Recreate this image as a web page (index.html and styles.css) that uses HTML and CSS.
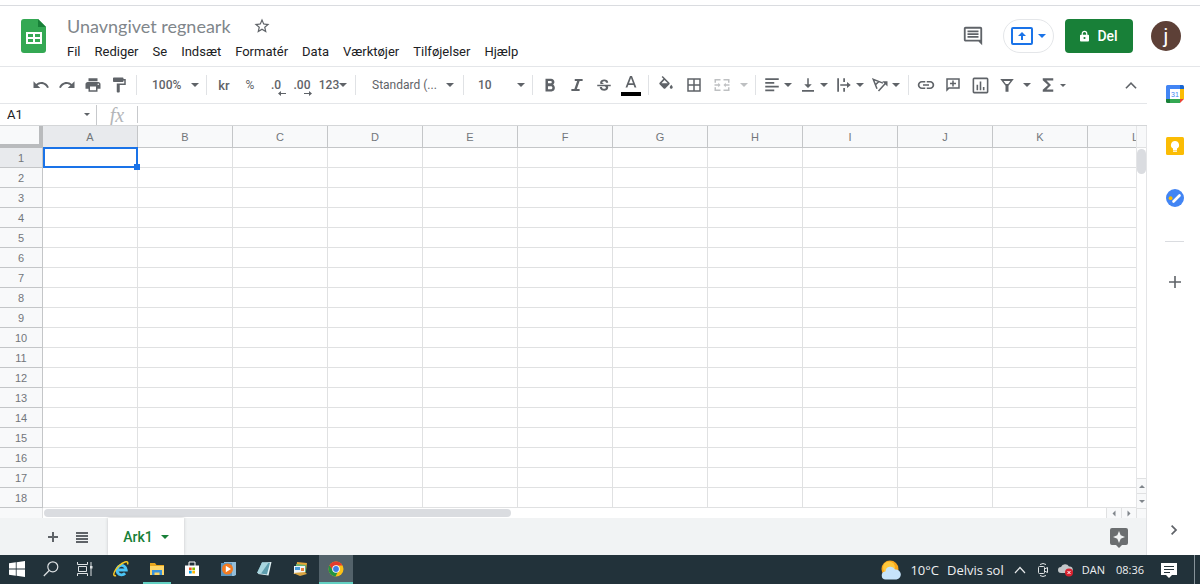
FILE: index.html
```html
<!DOCTYPE html>
<html lang="da">
<head>
<meta charset="utf-8">
<title>Unavngivet regneark</title>
<link rel="stylesheet" href="styles.css">
</head>
<body>
<header class="header">
  <svg class="logo" viewBox="0 0 26 36"><path fill="#34a853" d="M3 1h14l8 8v23a3 3 0 0 1-3 3H3a3 3 0 0 1-3-3V4a3 3 0 0 1 3-3z"/><path fill="#188038" d="M17 1l8 8h-8z"/><path fill="#fff" fill-rule="evenodd" d="M5 14h16v12H5zM7 16v3h5v-3zm7 0v3h5v-3zM7 21v3h5v-3zm7 0v3h5v-3z"/></svg>
  <div class="heading">
    <div class="title-row">
      <h1 class="title">Unavngivet regneark</h1>
      <button class="plain star" aria-label="Stjernemarkér"><svg class="icon" viewBox="0 0 24 24"><path d="M22 9.24l-7.19-.62L12 2 9.19 8.63 2 9.24l5.46 4.73L5.82 21 12 17.27 18.18 21l-1.63-7.03L22 9.24zM12 15.4l-3.76 2.27 1-4.28-3.32-2.88 4.38-.38L12 6.1l1.71 4.04 4.38.38-3.32 2.88 1 4.28L12 15.4z"/></svg></button>
    </div>
    <nav class="menu">
      <button class="plain">Fil</button><button class="plain">Rediger</button><button class="plain">Se</button><button class="plain">Indsæt</button><button class="plain">Formatér</button><button class="plain">Data</button><button class="plain">Værktøjer</button><button class="plain">Tilføjelser</button><button class="plain">Hjælp</button>
    </nav>
  </div>
  <div class="actions">
    <button class="plain comments" aria-label="Kommentarer"><svg class="icon large" viewBox="0 0 24 24"><path d="M22 4c0-1.100-.9-2-2-2H4c-1.100 0-2 .9-2 2v12c0 1.100.9 2 2 2h14l4 4V4zM4 16V4h16v12z"/><path d="M6 12h12v2H6zM6 9h12v2H6zM6 6h12v2H6z"/></svg></button>
    <button class="plain present" aria-label="Præsentér"><svg class="present-icon" viewBox="0 0 22 18"><rect x="1" y="1" width="20" height="16" rx="1" fill="none" stroke="#1a73e8" stroke-width="2"/><path fill="#1a73e8" d="M10 13V9H7l4-4 4 4h-3v4z"/></svg><span class="caret"></span></button>
    <button class="plain share"><svg class="lock" viewBox="0 0 10 12"><path fill="none" stroke="#fff" stroke-width="1.300" d="M2.500 5V3.300a2.500 2.500 0 0 1 5 0V5"/><path fill="#fff" fill-rule="evenodd" d="M1 4.500h8a1 1 0 0 1 1 1V11a1 1 0 0 1-1 1H1a1 1 0 0 1-1-1V5.500a1 1 0 0 1 1-1zM5 7a1.200 1.200 0 1 0 0 2.400A1.200 1.200 0 0 0 5 7z"/></svg>Del</button>
    <button class="plain avatar" aria-label="Konto">j</button>
  </div>
</header>
<div class="workspace">
  <main class="editor">
    <div class="toolbar">
      <div class="group">
        <button class="plain tool" aria-label="Fortryd"><svg class="icon" viewBox="0 0 24 24"><path d="M12.500 8c-2.650 0-5.050.99-6.900 2.600L2 7v9h9l-3.620-3.620c1.390-1.160 3.160-1.880 5.120-1.880 3.540 0 6.550 2.310 7.600 5.500l2.370-.78C21.080 11.030 17.150 8 12.500 8z"/></svg></button>
        <button class="plain tool" aria-label="Annuller fortryd"><svg class="icon" viewBox="0 0 24 24"><path d="M18.400 10.600C16.550 8.990 14.150 8 11.500 8c-4.650 0-8.580 3.030-9.960 7.220L3.900 16c1.050-3.190 4.050-5.500 7.600-5.500 1.950 0 3.730.72 5.120 1.880L13 16h9V7l-3.600 3.600z"/></svg></button>
        <button class="plain tool" aria-label="Udskriv"><svg class="icon" viewBox="0 0 24 24"><path d="M19 8H5c-1.660 0-3 1.340-3 3v6h4v4h12v-4h4v-6c0-1.660-1.340-3-3-3zm-3 11H8v-5h8v5zm3-7c-.55 0-1-.45-1-1s.45-1 1-1 1 .45 1 1-.45 1-1 1zm-1-9H6v4h12V3z"/></svg></button>
        <button class="plain tool" aria-label="Formatpensel"><svg class="icon" viewBox="0 0 24 24"><path d="M18 4V3c0-.55-.45-1-1-1H5c-.55 0-1 .45-1 1v4c0 .55.45 1 1 1h12c.55 0 1-.45 1-1V6h1v4H9v11c0 .55.45 1 1 1h2c.55 0 1-.45 1-1v-9h8V4h-3z"/></svg></button>
      </div>
      <span class="sep"></span>
      <label class="pick pick-zoom"><select aria-label="Zoom"><option>100%</option></select><span class="caret"></span></label>
      <span class="sep"></span>
      <div class="group">
        <button class="plain tool strong">kr</button>
        <button class="plain tool">%</button>
        <button class="plain tool decimal">.0<svg class="shift" viewBox="0 0 8 5"><path d="M3 0v2h5v1H3v2L0 2.500z"/></svg></button>
        <button class="plain tool decimal">.00<svg class="shift" viewBox="0 0 8 5"><path d="M5 0v2H0v1h5v2l3-2.500z"/></svg></button>
        <button class="plain number">123<span class="caret"></span></button>
      </div>
      <span class="sep"></span>
      <label class="pick pick-font"><select aria-label="Skrifttype"><option>Standard (...</option></select><span class="caret"></span></label>
      <span class="sep"></span>
      <label class="pick pick-size"><select aria-label="Skriftstørrelse"><option>10</option></select><span class="caret"></span></label>
      <span class="sep"></span>
      <div class="group tight">
        <button class="plain tool" aria-label="Fed"><svg class="icon" viewBox="0 0 24 24"><path d="M16.200 11.200c1-.7 1.700-1.900 1.700-3.200 0-2.500-1.900-4.500-4.400-4.500H6v17h8.200c2.400 0 4.300-2 4.300-4.500 0-2-.9-3.900-2.300-4.800zM9.300 6.500h3.400c1 0 1.700.7 1.700 1.600s-.7 1.700-1.700 1.700H9.300zm4 11h-4v-4h4c1.100 0 1.900.8 1.900 2s-.8 2-1.900 2z"/></svg></button>
        <button class="plain tool" aria-label="Kursiv"><svg class="icon" viewBox="0 0 24 24"><path d="M9 4v2.800h3.200L8.500 17.200H4.500V20h11v-2.800h-3.700l3.700-10.400h4V4z"/></svg></button>
        <button class="plain tool" aria-label="Gennemstreget"><svg class="icon" viewBox="0 0 24 24"><path transform="translate(0 1.500)" d="M6.850 7.080C6.850 4.370 9.450 3 12.240 3c1.640 0 3 .49 3.900 1.280.77.65 1.460 1.730 1.460 3.240h-3.010c0-.31-.05-.59-.15-.85-.29-.86-1.200-1.280-2.250-1.280-1.860 0-2.340 1.020-2.340 1.700 0 .48.25.88.74 1.210.38.25.77.48 1.410.7H7.390c-.21-.34-.54-.89-.54-1.920zM21 12v-2H3v2h9.620c1.150.45 1.960.75 1.960 1.970 0 1-.81 1.670-2.280 1.670-1.540 0-2.930-.54-2.930-2.510H6.400c0 .55.08 1.130.24 1.580.81 2.290 3.290 3.300 5.670 3.300 2.270 0 5.300-.89 5.300-4.050 0-.3-.01-1.160-.48-1.940H21V12z"/></svg></button>
        <button class="plain tool" aria-label="Tekstfarve"><svg class="text-color" viewBox="0 0 20 22"><path d="M9 2L4.500 13.500h1.900l.9-2.500h5.300l.9 2.500h1.900L11 2zM8 9.300L10 4l2 5.300z"/><path fill="#000" d="M0 18h20v4H0z"/></svg></button>
      </div>
      <span class="sep"></span>
      <div class="group loose">
        <button class="plain tool" aria-label="Udfyldningsfarve"><svg class="icon" viewBox="0 0 24 24"><path d="M16.560 8.940L7.620 0 6.210 1.410l2.380 2.380-5.150 5.150c-.59.59-.59 1.540 0 2.120l5.500 5.500c.6.590 1.530.590 2.120 0l5.500-5.500c.59-.58.59-1.530 0-2.120zM6 9.500L10 5.210 14.300 9.500z"/><path d="M19 11.500s-2 2.170-2 3.500c0 1.100.9 2 2 2s2-.9 2-2c0-1.330-2-3.500-2-3.500z"/></svg></button>
        <button class="plain tool" aria-label="Kanter"><svg class="icon" viewBox="0 0 24 24"><path d="M3 3v18h18V3H3zm8 16H5v-6h6v6zm0-8H5V5h6v6zm8 8h-6v-6h6v6zm0-8h-6V5h6v6z"/></svg></button>
        <button class="plain merge" aria-label="Flet celler" disabled><svg class="icon" viewBox="0 0 24 24"><path d="M2 4h8v2H4v3H2zm12 0h8v5h-2V6h-6zM2 15h2v3h6v2H2zm18 0h2v5h-8v-2h6zM2 11h5V9l3 3-3 3v-2H2zm20 0h-5V9l-3 3 3 3v-2h5z"/></svg><span class="caret"></span></button>
      </div>
      <span class="sep"></span>
      <div class="group">
        <button class="plain drop" aria-label="Juster vandret"><svg class="icon" viewBox="0 0 24 24"><path d="M3 3h18v2.400H3zM3 8h12v2.400H3zM3 13h18v2.400H3zM3 18h12v2.400H3z"/></svg><span class="caret"></span></button>
        <button class="plain drop" aria-label="Juster lodret"><svg class="icon" viewBox="0 0 24 24"><path d="M17 11h-4V3h-2v8H7l5 5zM4 18.500V21h16v-2.500z"/></svg><span class="caret"></span></button>
        <button class="plain drop" aria-label="Tekstombrydning"><svg class="icon" viewBox="0 0 24 24"><path d="M3 3h2.300v18H3zM11 3h2.300v5H11zM11 16h2.300v5H11zM7 11h9V8l5 4-5 4v-3H7z"/></svg><span class="caret"></span></button>
        <button class="plain drop" aria-label="Tekstrotation"><svg class="icon" viewBox="0 0 24 24"><path fill="none" stroke="#5f6368" stroke-width="2" d="M8 17L3 4.500 16 9.500M6 11.500l5-4.500M10 20L20 9"/><path d="M15 7h7v7z"/></svg><span class="caret"></span></button>
      </div>
      <span class="sep"></span>
      <div class="group tight">
        <button class="plain tool" aria-label="Indsæt link"><svg class="icon" viewBox="0 0 24 24"><path d="M3.300 12c0-1.900 1.400-3.300 3.200-3.300H11V6.600H6.500C3.500 6.600 1 9 1 12s2.500 5.400 5.500 5.400H11v-2.100H6.500c-1.800 0-3.200-1.400-3.200-3.300zM8 13.100h8v-2.200H8zm9.500-6.500H13v2.100h4.500c1.800 0 3.200 1.400 3.200 3.300s-1.400 3.300-3.200 3.300H13v2.100h4.500c3 0 5.500-2.400 5.500-5.400s-2.500-5.400-5.500-5.400z"/></svg></button>
        <button class="plain tool" aria-label="Indsæt kommentar"><svg class="icon" viewBox="0 0 24 24"><path fill-rule="evenodd" d="M3 3h18v14H7l-4 4zm2 2v11l1-1h13V5zM11 6h2v3h3v2h-3v3h-2v-3H8V9h3z"/></svg></button>
        <button class="plain tool" aria-label="Indsæt diagram"><svg class="icon chart" viewBox="0 0 24 24"><path fill-rule="evenodd" d="M4 2h16a2 2 0 0 1 2 2v16a2 2 0 0 1-2 2H4a2 2 0 0 1-2-2V4a2 2 0 0 1 2-2zm0 2v16h16V4zM7 11h2v7H7zM11 7h2v11h-2zM15 14h2v4h-2z"/></svg></button>
        <button class="plain filter" aria-label="Opret filter"><svg class="icon" viewBox="0 0 24 24"><path fill-rule="evenodd" d="M3 4h18l-7 9v8h-4v-8zm4.500 2.500l3 4h3l3-4z"/></svg><span class="caret"></span></button>
        <button class="plain drop" aria-label="Funktioner"><svg class="icon" viewBox="0 0 24 24"><path d="M19 3H5v2.800l7 6.200-7 6.200V21h14v-3H10l6-6-6-6h9z"/></svg><span class="caret small"></span></button>
      </div>
      <button class="plain tool collapse" aria-label="Skjul menuerne"><svg class="icon" viewBox="0 0 24 24"><path d="M12 8l-7.500 7.500L6 17l6-6 6 6 1.500-1.500z"/></svg></button>
    </div>
    <div class="formula">
      <label class="name-box"><input type="text" value="A1" aria-label="Navnefelt"><span class="caret small"></span></label>
      <span class="fx">fx</span>
      <input class="formula-input" type="text" aria-label="Formel">
    </div>
    <div class="sheet">
      <div class="grid">
        <table class="cells">
          <thead><tr><th class="corner"></th><th class="current">A</th><th>B</th><th>C</th><th>D</th><th>E</th><th>F</th><th>G</th><th>H</th><th>I</th><th>J</th><th>K</th><th>L</th></tr></thead>
          <tbody>
            <tr><th class="current">1</th><td><div class="selection"></div></td><td></td><td></td><td></td><td></td><td></td><td></td><td></td><td></td><td></td><td></td><td></td></tr>
            <tr><th>2</th><td></td><td></td><td></td><td></td><td></td><td></td><td></td><td></td><td></td><td></td><td></td><td></td></tr>
            <tr><th>3</th><td></td><td></td><td></td><td></td><td></td><td></td><td></td><td></td><td></td><td></td><td></td><td></td></tr>
            <tr><th>4</th><td></td><td></td><td></td><td></td><td></td><td></td><td></td><td></td><td></td><td></td><td></td><td></td></tr>
            <tr><th>5</th><td></td><td></td><td></td><td></td><td></td><td></td><td></td><td></td><td></td><td></td><td></td><td></td></tr>
            <tr><th>6</th><td></td><td></td><td></td><td></td><td></td><td></td><td></td><td></td><td></td><td></td><td></td><td></td></tr>
            <tr><th>7</th><td></td><td></td><td></td><td></td><td></td><td></td><td></td><td></td><td></td><td></td><td></td><td></td></tr>
            <tr><th>8</th><td></td><td></td><td></td><td></td><td></td><td></td><td></td><td></td><td></td><td></td><td></td><td></td></tr>
            <tr><th>9</th><td></td><td></td><td></td><td></td><td></td><td></td><td></td><td></td><td></td><td></td><td></td><td></td></tr>
            <tr><th>10</th><td></td><td></td><td></td><td></td><td></td><td></td><td></td><td></td><td></td><td></td><td></td><td></td></tr>
            <tr><th>11</th><td></td><td></td><td></td><td></td><td></td><td></td><td></td><td></td><td></td><td></td><td></td><td></td></tr>
            <tr><th>12</th><td></td><td></td><td></td><td></td><td></td><td></td><td></td><td></td><td></td><td></td><td></td><td></td></tr>
            <tr><th>13</th><td></td><td></td><td></td><td></td><td></td><td></td><td></td><td></td><td></td><td></td><td></td><td></td></tr>
            <tr><th>14</th><td></td><td></td><td></td><td></td><td></td><td></td><td></td><td></td><td></td><td></td><td></td><td></td></tr>
            <tr><th>15</th><td></td><td></td><td></td><td></td><td></td><td></td><td></td><td></td><td></td><td></td><td></td><td></td></tr>
            <tr><th>16</th><td></td><td></td><td></td><td></td><td></td><td></td><td></td><td></td><td></td><td></td><td></td><td></td></tr>
            <tr><th>17</th><td></td><td></td><td></td><td></td><td></td><td></td><td></td><td></td><td></td><td></td><td></td><td></td></tr>
            <tr><th>18</th><td></td><td></td><td></td><td></td><td></td><td></td><td></td><td></td><td></td><td></td><td></td><td></td></tr>
          </tbody>
        </table>
      </div>
      <div class="vscroll">
        <div class="vscroll-head"></div>
        <div class="vthumb"></div>
        <button class="plain step step-up" aria-label="Rul op"><span class="caret tiny up"></span></button>
        <button class="plain step" aria-label="Rul ned"><span class="caret tiny"></span></button>
      </div>
      <div class="hscroll">
        <div class="hscroll-head"></div>
        <div class="htrack"><div class="hthumb"></div></div>
        <button class="plain hstep" aria-label="Rul til venstre"><span class="caret tiny left"></span></button>
        <button class="plain hstep" aria-label="Rul til højre"><span class="caret tiny right"></span></button>
      </div>
      <div class="scroll-corner"></div>
    </div>
    <footer class="tabs">
      <button class="plain tab-tool" aria-label="Tilføj ark"><svg class="tab-icon" viewBox="0 0 12 12"><path d="M5 1h2v4h4v2H7v4H5V7H1V5h4z"/></svg></button>
      <button class="plain tab-tool" aria-label="Alle ark"><svg class="tab-icon" viewBox="0 0 12 12"><path d="M0 1h12v2H0zM0 4h12v2H0zM0 7h12v2H0zM0 10h12v2H0z"/></svg></button>
      <button class="plain tab">Ark1<span class="caret"></span></button>
      <button class="plain explore" aria-label="Udforsk"><svg class="explore-icon" viewBox="0 0 18 20"><path fill-rule="evenodd" d="M2 0h14a2 2 0 0 1 2 2v13a2 2 0 0 1-2 2h-4l-3 3-3-3H2a2 2 0 0 1-2-2V2a2 2 0 0 1 2-2zm7 3L7.300 7.300 3 9l4.300 1.700L9 15l1.700-4.300L15 9l-4.300-1.700z"/></svg></button>
    </footer>
  </main>
  <aside class="side">
    <button class="plain" aria-label="Kalender"><svg class="app" viewBox="0 0 18 18"><path fill="#fff" d="M3 3h12v12H3z"/><path fill="#4285f4" d="M1.500 0H14v4H4v10H0V1.500A1.500 1.500 0 0 1 1.500 0z"/><path fill="#1967d2" d="M14 0h2.500A1.500 1.500 0 0 1 18 1.500V4h-4z"/><path fill="#fbbc04" d="M14 4h4v10h-4z"/><path fill="#34a853" d="M4 14h10v4H4z"/><path fill="#188038" d="M0 14h4v4H1.500A1.500 1.500 0 0 1 0 16.500z"/><path fill="#ea4335" d="M14 14h4l-4 4z"/><text class="date" x="9" y="12" text-anchor="middle">31</text></svg></button>
    <button class="plain" aria-label="Keep"><svg class="app" viewBox="0 0 18 18"><rect width="18" height="18" rx="1.500" fill="#fbbc04"/><path fill="#fff" d="M9 4a4 4 0 0 0-2 7.500V13h4v-1.500A4 4 0 0 0 9 4zM7 13.600h4v1.200H7z"/></svg></button>
    <button class="plain" aria-label="Opgaver"><svg class="app" viewBox="0 0 18 18"><circle cx="9" cy="9" r="9" fill="#4285f4"/><path stroke="#fff" stroke-width="2.600" stroke-linecap="round" d="M7.500 12.500l6-6"/><circle cx="4.600" cy="9.200" r="1.900" fill="#fbbc04"/></svg></button>
    <hr class="side-line">
    <button class="plain add" aria-label="Hent tilføjelser"><svg class="tab-icon" viewBox="0 0 12 12"><path d="M5.200 0h1.600v5.200H12v1.600H6.800V12H5.200V6.800H0V5.200h5.200z"/></svg></button>
    <button class="plain hide" aria-label="Skjul sidepanel"><svg class="tab-icon" viewBox="0 0 12 12"><path d="M3.200 1L2 2.200 5.800 6 2 9.800 3.200 11l5-5z"/></svg></button>
  </aside>
</div>
<div class="taskbar">
  <button class="plain task" aria-label="Start"><svg class="os" viewBox="0 0 16 16"><path fill="#fff" d="M0 2.300l6.800-1v6.300H0zM7.600 1.200L16 0v7.600H7.600zM0 8.400h6.800v6.300L0 13.700zM7.600 8.400H16V16l-8.400-1.200z"/></svg></button>
  <button class="plain task" aria-label="Søg"><svg class="os" viewBox="0 0 16 16"><g fill="none" stroke="#dde1e3" stroke-width="1.200"><circle cx="9.800" cy="5.800" r="5"/><path d="M6.200 9.500L.8 15"/></g></svg></button>
  <button class="plain task" aria-label="Opgavevisning"><svg class="os" viewBox="0 0 16 16"><path fill="none" stroke="#dde1e3" d="M.5 1v2.500h10V1M1.500 5.500h8v5h-8zM.5 15v-2.500h10V15M14 1v14"/><path fill="#dde1e3" d="M13 5h2.500v2.500H13z"/></svg></button>
  <button class="plain task" aria-label="Internet Explorer"><svg class="os" viewBox="0 0 16 16"><path fill="none" stroke="#4cc4f5" stroke-width="2.800" d="M3.500 9h9.800a4.700 4.700 0 1 0-1.200 3.300"/><path fill="none" stroke="#f6c824" stroke-width="1.500" d="M3 14.500c-2 .8-2.800-.6-1.700-3.200C3 7 8 2.200 12 1c2.500-.8 3.300.3 2.500 2.500"/></svg></button>
  <button class="plain task open" aria-label="Stifinder"><svg class="os" viewBox="0 0 16 16"><path fill="#e8a51c" d="M1 2h5l1.500 2H15v9H1z"/><path fill="#ffd667" d="M1 5h14v9H1z"/><path fill="#3b93dc" d="M3 14V9h10v5h-2.500v-2.500h-5V14z"/></svg></button>
  <button class="plain task" aria-label="Microsoft Store"><svg class="os" viewBox="0 0 16 16"><path fill="none" stroke="#fff" d="M5 5V1h6v4"/><path fill="#fff" d="M1 4.500h14V15H1z"/><path fill="#f25022" d="M5 6.500h2.700v2.700H5z"/><path fill="#7fba00" d="M8.300 6.500H11v2.700H8.300z"/><path fill="#00a4ef" d="M5 9.800h2.700v2.700H5z"/><path fill="#ffb900" d="M8.300 9.800H11v2.700H8.300z"/></svg></button>
  <button class="plain task" aria-label="Medieafspiller"><svg class="os" viewBox="0 0 16 16"><path fill="#94bdd8" d="M4 1h12v13l-2 1H4z"/><path fill="#5c96bf" d="M1 2h11v13H1z"/><circle cx="7.500" cy="8" r="5.500" fill="#f47b20"/><path fill="#fff" d="M5.800 4.800v6.400L11 8z"/></svg></button>
  <button class="plain task" aria-label="Notesblok"><svg class="os" viewBox="0 0 16 16"><path fill="#e4f3f6" d="M6 1.500L15.500 1 12.500 14.500 2 13z"/><path fill="#5d9dad" d="M6 1.500l8 .3L11 13.500 1 12z"/><path fill="#a9d6df" d="M6 1.500l6.500.3L5 12.500l-4-.5z"/></svg></button>
  <button class="plain task" aria-label="Billeder"><svg class="os" viewBox="0 0 16 16"><path fill="#e5a737" d="M5 1l10 1-1 8-10-1z"/><path fill="#68b26d" d="M4 3l10 1v7H4z"/><path fill="#eef5fa" d="M2 5h11v8H2z"/><path fill="#4b9cd8" d="M3 6h5v3H3z"/><path fill="#e8803c" d="M9 7h3v3H9z"/><path fill="#d9a441" d="M1 12l12-1 2 2-7 2z"/></svg></button>
  <button class="plain task open active" aria-label="Chrome"><svg class="os" viewBox="0 0 16 16"><circle cx="8" cy="8" r="7.500" fill="#fbc116"/><path fill="#e33b2e" d="M1.500 4.200A7.500 7.500 0 0 1 14.500 4.500H8L5 10z"/><path fill="#229342" d="M1.500 4.200L5 9.700 9.700 11 7.500 15.500A7.500 7.500 0 0 1 1.500 4.200z"/><circle cx="8" cy="8" r="3.800" fill="#fff"/><circle cx="8" cy="8" r="2.900" fill="#3c7de8"/></svg></button>
  <div class="tray">
    <svg class="weather" viewBox="0 0 20 20"><circle cx="9" cy="9" r="8.500" fill="#f9a51b"/><circle cx="8" cy="7.500" r="6" fill="#ffc83d"/><path fill="#c6e3fa" d="M5 19.500a4 4 0 0 1-.5-8A5 5 0 0 1 14 9.500a5 5 0 0 1 1.500 10z"/></svg>
    <span class="temp">10°C</span><span class="sky">Delvis sol</span>
    <svg class="tray-icon" viewBox="0 0 12 12"><path fill="none" stroke="#e6e9ea" stroke-width="1.200" d="M1 9l5-5.500L11 9"/></svg>
    <svg class="tray-icon meet" viewBox="0 0 12 14"><g fill="none" stroke="#dfe3e4"><path d="M3 1.500Q6-.5 9 1.500M3 12.500q3 2 6 0"/><rect x="1.500" y="3.500" width="6" height="7" rx="1"/><path d="M7.500 6l3-1.500v5l-3-1.500"/></g></svg>
    <svg class="tray-icon cloud" viewBox="0 0 15 14"><path fill="#c3c7c9" d="M3 10a3 3 0 0 1 0-6 4.500 4.500 0 0 1 8-.5A3 3 0 0 1 12 10z"/><circle cx="11" cy="9.500" r="4" fill="#d8222f"/><path stroke="#fff" d="M9.500 8l3 3m0-3l-3 3"/></svg>
    <span class="lang">DAN</span><span class="clock">08:36</span>
    <svg class="notice" viewBox="0 0 16 16"><path fill="#fff" d="M0 1h16v12h-5l-3 3-3-3H0z"/><path stroke="#26343b" d="M3 4.500h10M3 7.500h10M3 10.500h6"/></svg>
    <span class="desktop-edge"></span>
  </div>
</div>
</body>
</html>
```
FILE: styles.css
```css
* { box-sizing: border-box; }
html, body { height: 100%; }
body {
  margin: 0;
  padding-top: 5px;
  display: flex;
  flex-direction: column;
  overflow: hidden;
  background: #fff;
  color: #202124;
  font-family: Roboto, "Liberation Sans", sans-serif;
  font-size: 13px;
}
.plain {
  display: flex;
  align-items: center;
  justify-content: center;
  margin: 0;
  padding: 0;
  border: 0;
  background: none;
  color: inherit;
  font: inherit;
}
svg { display: block; flex: none; }
input, select { font: inherit; color: inherit; border: 0; outline: 0; padding: 0; background: none; }
.icon { width: 18px; height: 18px; fill: #5f6368; }
.caret {
  flex: none;
  border: 4px solid transparent;
  border-top-color: #5f6368;
  border-bottom: 0;
}
.caret.small { border-width: 3px 3px 0; }
.caret.tiny { border-width: 3px 3px 0; border-top-color: #80868b; }
.caret.up { transform: rotate(180deg); }
.caret.left { transform: rotate(90deg); }
.caret.right { transform: rotate(-90deg); }

.header {
  display: flex;
  flex: none;
  height: 62px;
  padding-left: 21px;
  border-top: 1px solid #dadce0;
  border-bottom: 1px solid #e4e6e9;
}
.logo { width: 26px; height: 36px; margin-top: 12px; }
.heading { margin-left: 20px; padding-top: 8px; }
.title-row { display: flex; align-items: center; gap: 22px; height: 24px; }
.title { margin: 0; color: #80868b; font: 400 18px/24px Lato, Roboto, sans-serif; }
.menu { display: flex; gap: 14px; height: 26px; font-size: 13px; }
.actions { display: flex; align-items: center; margin-left: auto; padding-right: 19px; }
.icon.large { width: 22px; height: 22px; }
.comments { margin-right: 19px; }
.present { gap: 5px; width: 51px; height: 34px; border: 1px solid #e4e6e9; border-radius: 17px; }
.present-icon { width: 22px; height: 18px; }
.present .caret { border-top-color: #1a73e8; }
.share { gap: 8px; width: 68px; height: 34px; margin: 0 18px 0 11px; border-radius: 4px; background: #188038; color: #fff; font-size: 14px; font-weight: 500; }
.lock { width: 9px; height: 12px; }
.avatar { width: 30px; height: 30px; border-radius: 50%; background: #5d4037; color: #fff; font-size: 20px; }

.workspace { display: flex; flex: 1; min-height: 0; }
.editor { display: flex; flex: 1; flex-direction: column; min-width: 0; }
.toolbar {
  display: flex;
  flex: none;
  align-items: center;
  height: 37px;
  padding: 0 3px 0 28px;
  border-bottom: 1px solid #e4e6e9;
  color: #5f6368;
  font-size: 12px;
}
.sep { flex: none; width: 1px; height: 20px; margin: 0 4px; background: #e0e2e5; }
.group { display: flex; align-items: center; }
.group.tight { gap: 1px; }
.group.loose { gap: 2px; }
.tool { position: relative; width: 26px; height: 26px; }
.tool.strong { font-size: 13px; font-weight: 500; }
.decimal { font-weight: 500; }
.shift { position: absolute; right: 3px; bottom: 2px; width: 8px; height: 5px; fill: #5f6368; }
.number { width: 36px; font-weight: 500; }
.pick { display: flex; align-items: center; font-weight: 500; }
.pick select { flex: 1; min-width: 0; appearance: none; }
.pick-zoom { width: 61px; padding: 0 3px 0 11px; }
.pick-font { width: 99px; padding: 0 5px 0 12px; font-weight: 400; }
.pick-size { width: 60px; padding: 0 3px 0 10px; }
.text-color { width: 20px; height: 22px; fill: #5f6368; }
.merge { gap: 9px; width: 42px; justify-content: flex-start; padding-left: 4px; opacity: .4; }
.drop { gap: 3px; width: 36px; justify-content: flex-start; padding-left: 3px; }
.filter { gap: 7px; width: 41px; justify-content: flex-start; padding-left: 4px; }
.chart { width: 19px; height: 19px; }
.collapse { margin-left: auto; }

.formula { display: flex; flex: none; align-items: center; height: 21px; }
.name-box { display: flex; align-items: center; width: 97px; height: 20px; padding: 0 6px 0 7px; border-right: 1px solid #c7c9cc; }
.name-box input { flex: 1; min-width: 0; }
.fx { width: 40px; text-align: center; color: #b4b6b9; font: italic 20px/20px "Liberation Serif", serif; }
.formula-input { flex: 1; height: 17px; border-left: 1px solid #c7c9cc; }

.sheet { display: grid; flex: 1; grid-template-columns: 1fr 11px; grid-template-rows: 1fr 10px; min-height: 0; border-top: 1px solid #d4d6d8; }
.grid { min-width: 0; min-height: 0; overflow: hidden; }
.cells { width: 1183px; table-layout: fixed; border-collapse: separate; border-spacing: 0; font: 11px/12px "Liberation Sans", sans-serif; }
.cells th, .cells td { height: 20px; padding: 0; border-right: 1px solid #e0e1e2; border-bottom: 1px solid #e0e1e2; }
.cells td { position: relative; }
.cells th { background: #f8f9fa; color: #72767a; border-color: #c4c6c8; font-weight: 400; }
.cells thead th { height: 22px; }
.cells tbody th { height: 20px; }
.cells .current { background: #e8eaed; }
.cells thead .corner { width: 43px; border-right: 4px solid #b9bbbd; border-bottom: 4px solid #b9bbbd; }
.selection { position: absolute; inset: -1px -1px -1px 0; z-index: 1; border: 2px solid #1a73e8; }
.selection::after { content: ""; position: absolute; right: -4px; bottom: -4px; width: 6px; height: 6px; background: #1a73e8; }
.vscroll { display: flex; flex-direction: column; border: solid #e4e5e7; border-width: 0 1px; }
.vscroll-head { height: 22px; background: #f8f9fa; border-bottom: 1px solid #e0e1e2; }
.vthumb { height: 25px; margin-top: 1px; border-radius: 5px; background: #dadce0; }
.step { height: 15px; background: #f8f9fa; border-top: 1px solid #e0e1e2; }
.step-up { margin-top: auto; }
.hscroll { display: flex; }
.hscroll-head { width: 43px; background: #f8f9fa; border-right: 1px solid #e0e1e2; }
.htrack { flex: 1; padding: 1px 0 1px 1px; }
.hthumb { width: 44%; height: 8px; border-radius: 4px; background: #dadce0; }
.hstep { width: 15px; background: #f8f9fa; border-left: 1px solid #e0e1e2; }
.scroll-corner { background: #f8f9fa; border: solid #e0e1e2; border-width: 1px 1px 0; }

.tabs { display: flex; flex: none; align-items: center; height: 37px; padding: 0 18px 0 38px; background: #f1f3f4; border-right: 1px solid #e0e2e5; }
.tab-tool { width: 29px; height: 29px; }
.tab-icon { width: 12px; height: 12px; fill: #5f6368; }
.tab { gap: 8px; width: 76px; height: 37px; margin-left: 12px; background: #fff; box-shadow: 0 0 3px #c4c6c8; color: #188038; font-size: 14px; font-weight: 500; }
.tab .caret { border-top-color: #188038; }
.explore { margin-left: auto; padding-top: 2px; }
.explore-icon { width: 18px; height: 20px; fill: #6b6e70; }

.side { display: flex; flex: none; flex-direction: column; align-items: center; width: 53px; padding: 18px 0 19px 2px; }
.app { width: 18px; height: 18px; margin-bottom: 34px; }
.date { fill: #4285f4; font: 7px "Liberation Sans", sans-serif; }
.side-line { width: 19px; margin: 0; border: 0; border-top: 1px solid #dadce0; }
.add { margin-top: 34px; }
.hide { margin-top: auto; }

.taskbar { display: flex; flex: none; height: 29px; background: #22323a; color: #eef0f1; }
.task { width: 34px; margin-right: 2px; border-bottom: 2px solid transparent; }
.task:nth-child(-n+2) { margin-right: 0; }
.task.open { width: 28px; margin: 0 4px 0 3px; border-bottom-color: #62d0c2; }
.task.active { width: 34px; margin: 0; background: #53626a; }
.os { width: 16px; height: 16px; }
.tray { display: flex; align-items: center; margin-left: auto; font: 12px "Open Sans", "Noto Sans", sans-serif; }
.weather { width: 20px; height: 20px; margin-right: 9px; }
.temp, .sky { font-size: 13px; }
.temp { margin-right: 8px; }
.sky { margin-right: 10px; }
.tray-icon { width: 12px; height: 12px; margin-right: 11px; }
.tray-icon.meet { height: 14px; margin-right: 9px; }
.tray-icon.cloud { width: 15px; height: 14px; margin-right: 9px; }
.lang { margin-right: 11px; font-size: 11px; }
.clock { margin-right: 17px; font-size: 11px; }
.notice { width: 16px; height: 16px; margin-right: 17px; }
.desktop-edge { width: 6px; height: 29px; border-left: 1px solid #87939a; }
```
